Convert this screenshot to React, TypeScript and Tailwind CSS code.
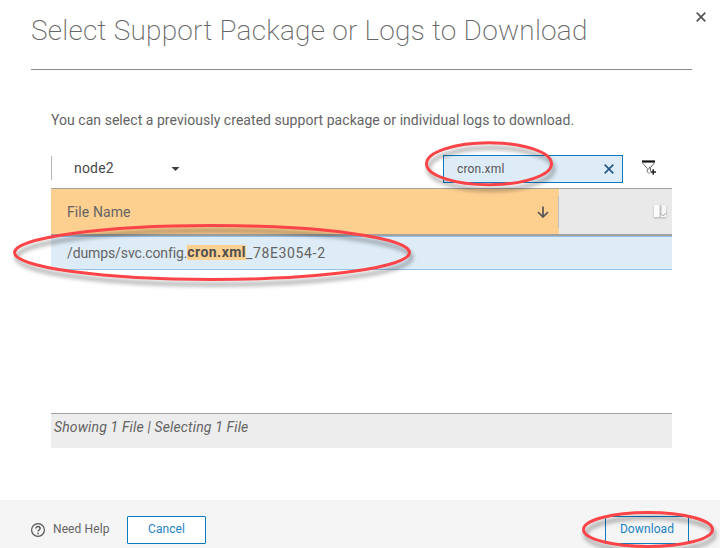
import React from "react";

type EllipseProps = { cx: number; cy: number; rx: number; ry: number };

function Highlight({ cx, cy, rx, ry }: EllipseProps) {
  return <ellipse cx={cx} cy={cy} rx={rx} ry={ry} fill="none" stroke="#fb4447" strokeWidth="3" />;
}

function Annotations() {
  return (
    <svg className="pointer-events-none absolute inset-0" width="720" height="548" viewBox="0 0 720 548">
      <g className="drop-shadow-[2px_5px_2px_rgba(0,0,0,0.4)]">
        <Highlight cx={489} cy={163.7} rx={62.5} ry={21} />
        <Highlight cx={212} cy={252.5} rx={197.5} ry={27} />
        <Highlight cx={648} cy={529.5} rx={64.5} ry={17} />
      </g>
    </svg>
  );
}

function FilterIcon() {
  return (
    <svg width="16" height="16" viewBox="0 0 16 16" fill="none" className="shrink-0">
      <path d="M1 1.500h13" stroke="#111" strokeWidth="2.200" />
      <path d="M1.500 3l4.800 5.500V12l2.200 1.500" stroke="#777" />
      <path d="M13.300 3L9.500 7.500v3.500M7.500 9.500l1.500-3" stroke="#666" />
      <path d="M9.500 12h5.500M12.250 9.300v5.500" stroke="#222" strokeWidth="1.500" />
    </svg>
  );
}

function ColumnsIcon() {
  return (
    <svg width="14" height="15" viewBox="0 0 14 15" className="shrink-0 drop-shadow-[0px_1px_1px_rgba(0,0,0,0.25)]">
      <path d="M0 1h6v12H0z" fill="#fbfbfb" />
      <path d="M8 1h4v12H7z" fill="#f6f6f6" />
      <path d="M6 1v12" stroke="#c2c2c2" />
      <path d="M7 9.500l2.200 2.500 3.300-3.500" stroke="#aaa" fill="none" />
    </svg>
  );
}

export default function App() {
  return (
    <div className="relative flex h-[548px] w-[720px] flex-col overflow-hidden bg-white font-['Roboto','Liberation_Sans',sans-serif] text-sm text-[#646464]">
      <header className="ml-[31px] flex h-[70px] w-[661px] shrink-0 justify-between border-b border-[#8c8c8c]">
        <h1 className="pt-[11px] text-[28px] leading-10 font-extralight whitespace-nowrap text-[#666] tracking-[0.235px]">
          Select Support Package or Logs to Download
        </h1>
        <svg width="10" height="10" viewBox="0 0 10 10" className="-mr-[14px] mt-3 shrink-0">
          <path d="M.7.7l8.600 8.600M9.300.7L.7 9.300" stroke="#555" strokeWidth="1.700" />
        </svg>
      </header>

      <main className="ml-[51px] flex w-[621px] grow flex-col">
        <p className="mt-10 h-[45px] leading-5 whitespace-nowrap tracking-[0.043px]">
          You can select a previously created support package or individual logs to download.
        </p>

        <div className="flex h-[33px] shrink-0 items-start">
          <div className="mt-px flex h-6 w-[392px] items-center border-l border-[#b4b4b4] pl-[22px]">
            <span className="w-[97px] text-[#4a4a4a] tracking-[0.2px]">node2</span>
            <svg width="9" height="5" viewBox="0 0 9 5" className="mt-0.5">
              <path d="M.5 0h8L4.500 4z" fill="#3c3c3c" />
            </svg>
          </div>
          <div className="flex h-7 w-[180px] items-center justify-between border border-[#0b7abf] bg-[#deecf7] pr-2 pl-[13px]">
            <span className="pb-px text-xs text-[#555] tracking-[0.15px]">cron.xml</span>
            <svg width="10" height="10" viewBox="0 0 10 10">
              <path d="M.7.7l8.600 8.600M9.300.7L.7 9.300" stroke="#265a88" strokeWidth="1.700" />
            </svg>
          </div>
          <div className="mt-[5px] ml-[18px]">
            <FilterIcon />
          </div>
        </div>

        <div className="flex h-12 shrink-0 border-t border-b-2 border-[#a2a2a2] bg-[#e9e9e9]">
          <div className="flex w-[508px] items-center justify-between bg-[#fed090] pl-4">
            <span className="tracking-[0.1px]">File Name</span>
            <div className="flex items-center">
              <svg width="12" height="12" viewBox="0 0 12 12" fill="none" stroke="#555" strokeWidth="1.700">
                <path d="M6 .5v10M1 6l5 5 5-5" />
              </svg>
              <span className="ml-[9px] h-8 w-px bg-[#bcbcbc]" />
            </div>
          </div>
          <div className="flex grow items-center justify-end pr-1">
            <ColumnsIcon />
          </div>
        </div>

        <div className="flex h-[34px] shrink-0 items-center border-y border-[#94c1e9] bg-[#deecf7] pb-px pl-4 whitespace-nowrap">
          <span className="tracking-[-0.11px]">/dumps/svc.config.</span>
          <b className="h-[15px] bg-[#fed090] leading-[15px] font-bold tracking-[0.45px] text-[#505050]">cron.xml</b>
          <span className="tracking-[0.65px]">_78E3054-2</span>
        </div>

        <div className="mt-[143px] h-[35px] shrink-0 border-t border-[#a2a2a2] bg-[#ededed] pt-[3px] pl-[3px]">
          <span className="leading-5 italic tracking-[0.15px]">Showing 1 File | Selecting 1 File</span>
        </div>
      </main>

      <footer className="flex h-12 shrink-0 items-start bg-[#f5f5f5] pt-4 pl-[31px] text-xs">
        <svg width="14" height="14" viewBox="0 0 14 14" className="mt-[7px]" fill="none" stroke="#555">
          <circle cx="7" cy="7" r="6.400" strokeWidth="1.200" />
          <path d="M4.900 5.500c0-2.700 4.200-2.600 4.200 0 0 1.500-2 1.500-2 3M7.100 9.800v1.400" strokeWidth="1.500" />
        </svg>
        <span className="mt-[5px] ml-2 w-[74px] tracking-[0.1px]">Need Help</span>
        <button className="h-7 w-[79px] rounded-[1px] border border-[#0b7abf] bg-white pb-0.5 text-[#1d82c2] tracking-[0.05px]">Cancel</button>
        <button className="ml-[399px] h-7 w-[84px] border border-[#0b7abf] pb-0.5 text-[#1d82c2] tracking-[0.1px]">Download</button>
      </footer>
      <Annotations />
    </div>
  );
}
